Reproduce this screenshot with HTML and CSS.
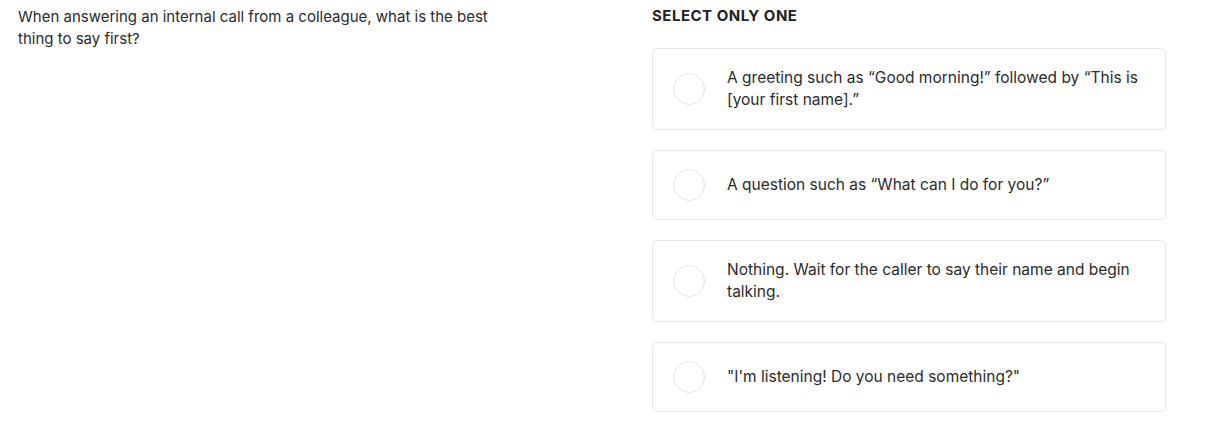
FILE: index.html
```html
<!DOCTYPE html>
<html lang="en">
<head>
<meta charset="UTF-8">
<meta name="viewport" content="width=device-width, initial-scale=1.0">
<title>Question</title>
<link rel="stylesheet" href="styles.css">
</head>
<body>

<div class="page">

<div class="question">
When answering an internal call from a colleague, what is the best thing to say first?
</div>

<div class="answers">
<div class="label">SELECT ONLY ONE</div>

<div class="option">
<span class="radio"></span>
<span class="text">A greeting such as “Good morning!” followed by “This is [your first name].”</span>
</div>

<div class="option">
<span class="radio"></span>
<span class="text">A question such as “What can I do for you?”</span>
</div>

<div class="option">
<span class="radio"></span>
<span class="text">Nothing. Wait for the caller to say their name and begin talking.</span>
</div>

<div class="option">
<span class="radio"></span>
<span class="text">"I'm listening! Do you need something?"</span>
</div>

</div>

</div>

</body>
</html>
```

FILE: styles.css
```css
body{
    margin:0;
    font-family:Inter,"Noto Sans",sans-serif;
    color:#2b2b2b;
    background:white;
}

.page{
    display:grid;
    grid-template-columns:500px 514px;
    column-gap:134px;
    padding:6px 0 0 18px;
}

.question{
    font-size:15px;
    line-height:22px;
}

.label{
    font-size:15px;
    font-weight:700;
    letter-spacing:0.5px;
    line-height:20px;
    color:#222;
    margin-bottom:22px;
}

.answers{
    display:flex;
    flex-direction:column;
}

.option{
    display:flex;
    align-items:center;
    gap:22px;
    padding:18px 20px;
    border:1px solid #e6e6e6;
    border-radius:5px;
    margin-bottom:20px;
    font-size:15.5px;
    line-height:22px;
}

.radio{
    flex:none;
    width:30px;
    height:30px;
    border:1px solid #e4e4e4;
    border-radius:50%;
}
```
